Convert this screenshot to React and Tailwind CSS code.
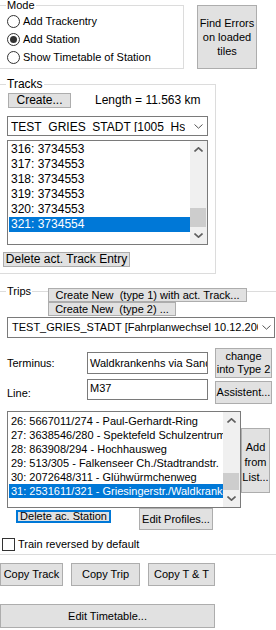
import React from 'react'

const Btn = ({ className = '', children }) => (
  <button
    type="button"
    className={`flex shrink-0 items-center justify-center whitespace-nowrap border border-[#adadad] bg-[#e1e1e1] text-black ${className}`}
  >
    {children}
  </button>
)

const Chevron = ({ up = false, thin = false }) => (
  <svg width="9" height="5" viewBox="0 0 9 5">
    <path
      d={up ? 'M0.5 4.5 L4.5 0.8 L8.5 4.5' : 'M0.5 0.5 L4.5 4.2 L8.5 0.5'}
      fill="none"
      stroke={thin ? '#555' : '#606060'}
      strokeWidth={thin ? 1 : 1.6}
    />
  </svg>
)

const ScrollBar = ({ thumb }) => (
  <div className="flex w-[17px] shrink-0 flex-col bg-[#f0f0f0]">
    <div className="flex h-[17px] items-center justify-center">
      <Chevron up />
    </div>
    <div className="flex flex-1 flex-col justify-end">
      <div className={`mr-px ${thumb} bg-[#cdcdcd]`} />
    </div>
    <div className="flex h-[17px] items-center justify-center">
      <Chevron />
    </div>
  </div>
)

const Radio = ({ label, checked = false }) => (
  <div className="flex h-[18px] items-center">
    <span className="flex h-[13px] w-[13px] items-center justify-center rounded-full border border-[#333] bg-white">
      {checked ? <span className="h-[7px] w-[7px] rounded-full bg-[#333]" /> : null}
    </span>
    <span className="ml-[3px]">{label}</span>
  </div>
)

const trackRows = ['316: 3734553', '317: 3734553', '318: 3734553', '319: 3734553', '320: 3734553', '321: 3734554']

const stationRows = [
  '26: 5667011/274 - Paul-Gerhardt-Ring',
  '27: 3638546/280 - Spektefeld Schulzentrum',
  '28: 863908/294 - Hochhausweg',
  '29: 513/305 - Falkenseer Ch./Stadtrandstr.',
  '30: 2072648/311 - Glühwürmchenweg',
  '31: 2531611/321 - Griesingerstr./Waldkrankenhaus',
]

export default function App() {
  return (
    <div className="h-[630px] w-[276px] overflow-hidden bg-white font-['Liberation_Sans',Arial,sans-serif] text-[11px] leading-[13px] text-black">
      {/* Mode */}
      <div className="flex h-[69px] items-start">
        <fieldset className="-ml-[2px] -mt-px h-[70px] w-[186px] shrink-0 border border-[#dcdcdc]">
          <legend className="ml-[7px] px-px">Mode</legend>
          <div className="flex flex-col pl-[8px]">
            <Radio label="Add Trackentry" />
            <Radio label="Add Station" checked />
            <Radio label="Show Timetable of Station" />
          </div>
        </fieldset>
        <Btn className="ml-[13px] mt-[5px] h-[64px] w-[60px] flex-col leading-[14px]">
          <span>Find Errors</span>
          <span>on loaded</span>
          <span>tiles</span>
        </Btn>
      </div>

      {/* Tracks */}
      <fieldset className="-ml-[2px] mt-[9px] h-[196px] w-[218px] border border-[#dcdcdc] text-[12px]">
        <legend className="ml-[7px] px-px">Tracks</legend>
        <div className="flex flex-col pl-[8px]">
          <div className="mt-[2px] flex items-center">
            <Btn className="ml-px h-[15px] w-[63px]">Create...</Btn>
            <span className="ml-[24px]">Length = 11.563 km</span>
          </div>

          <div className="mt-[8px] flex h-[20px] w-[201px] items-center justify-between border border-[#7a7a7a] pl-[3px] pr-[4px]">
            <span className="block h-[11px] overflow-hidden whitespace-nowrap leading-[13px]">TEST_GRIES_STADT [1005_Hs</span>
            <Chevron thin />
          </div>

          <div className="mt-[4px] flex h-[105px] w-[201px] border border-[#7a7a7a]">
            <div className="flex-1 overflow-hidden pl-px pt-px">
              {trackRows.map((row, i) => (
                <div
                  key={row}
                  className={`h-[15px] whitespace-nowrap pl-[2px] leading-[15px] ${i === trackRows.length - 1 ? 'bg-[#0078d7] text-white' : ''}`}
                >
                  {row}
                </div>
              ))}
            </div>
            <ScrollBar thumb="h-[19px]" />
          </div>

          <Btn className="-ml-[4px] mt-[7px] h-[15px] w-[127px]">Delete act. Track Entry</Btn>
        </div>
      </fieldset>

      {/* Trips */}
      <fieldset className="-ml-[2px] mt-[11px] h-[270px] w-[280px] border border-[#dcdcdc]">
        <legend className="ml-[7px] px-px">Trips</legend>
        <div className="flex flex-col">
          <Btn className="-mt-[10px] ml-[49px] h-[14px] w-[199px] whitespace-pre">Create New  (type 1) with act. Track...</Btn>
          <Btn className="ml-[49px] h-[14px] w-[128px] whitespace-pre">Create New  (type 2) ...</Btn>

          <div className="ml-[8px] mt-px flex h-[21px] w-[268px] items-center border border-[#7a7a7a]">
            <span className="flex-1 overflow-hidden whitespace-nowrap pl-[4px]">TEST_GRIES_STADT [Fahrplanwechsel 10.12.2006]</span>
            <span className="flex w-[16px] shrink-0 justify-center">
              <Chevron thin />
            </span>
          </div>

          <div className="mt-[10px] flex h-[30px] items-center">
            <div className="w-[88px] shrink-0 pl-[8px]">Terminus:</div>
            <div className="flex h-[22px] w-[121px] shrink-0 items-center overflow-hidden whitespace-nowrap border border-[#7a7a7a] px-[2px]">
              Waldkrankenhs via Sandstr.
            </div>
            <Btn className="ml-[7px] h-[30px] w-[57px] flex-col leading-[13px]">
              <span>change</span>
              <span>into Type 2</span>
            </Btn>
          </div>

          <div className="flex items-start">
            <div className="mt-[9px] w-[88px] shrink-0 pl-[8px]">Line:</div>
            <div className="mt-px h-[21px] w-[121px] shrink-0 border border-[#7a7a7a] px-[2px] pt-[2px]">M37</div>
            <Btn className="ml-[7px] mt-[3px] h-[23px] w-[57px]">Assistent...</Btn>
          </div>

          <div className="mt-[7px] flex items-start">
            <div className="ml-[8px] flex h-[97px] w-[234px] shrink-0 border border-[#7a7a7a]">
              <div className="flex-1 overflow-hidden pl-px pt-[2px]">
                {stationRows.map((row, i) => (
                  <div
                    key={row}
                    className={`h-[14px] whitespace-nowrap pl-[2px] leading-[14px] ${i === stationRows.length - 1 ? 'bg-[#0078d7] text-white' : ''}`}
                  >
                    {row}
                  </div>
                ))}
              </div>
              <ScrollBar thumb="h-[17px]" />
            </div>
            <Btn className="mt-[17px] h-[65px] w-[29px] flex-col pt-[4px] leading-[15px]">
              <span>Add</span>
              <span>from</span>
              <span>List...</span>
            </Btn>
          </div>

          <div className="flex items-start">
            <button
              type="button"
              className="ml-[17px] mt-[2px] flex h-[13px] w-[95px] shrink-0 items-center justify-center whitespace-nowrap border-2 border-[#0078d7] bg-[#e1e1e1]"
            >
              Delete ac. Station
            </button>
            <Btn className="ml-[28px] h-[22px] w-[74px]">Edit Profiles...</Btn>
          </div>

          <div className="mt-[8px] flex h-[13px] items-center">
            <span className="ml-[3px] h-[13px] w-[13px] border border-[#333] bg-white" />
            <span className="ml-[3px]">Train reversed by default</span>
          </div>
        </div>
      </fieldset>

      {/* Copy buttons */}
      <div className="mt-[8px] flex">
        <Btn className="h-[23px] w-[63px]">Copy Track</Btn>
        <Btn className="ml-[8px] h-[23px] w-[69px]">Copy Trip</Btn>
        <Btn className="ml-[8px] h-[23px] w-[67px]">Copy T &amp; T</Btn>
      </div>

      <Btn className="mt-[18px] h-[24px] w-[215px]">Edit Timetable...</Btn>
    </div>
  )
}
